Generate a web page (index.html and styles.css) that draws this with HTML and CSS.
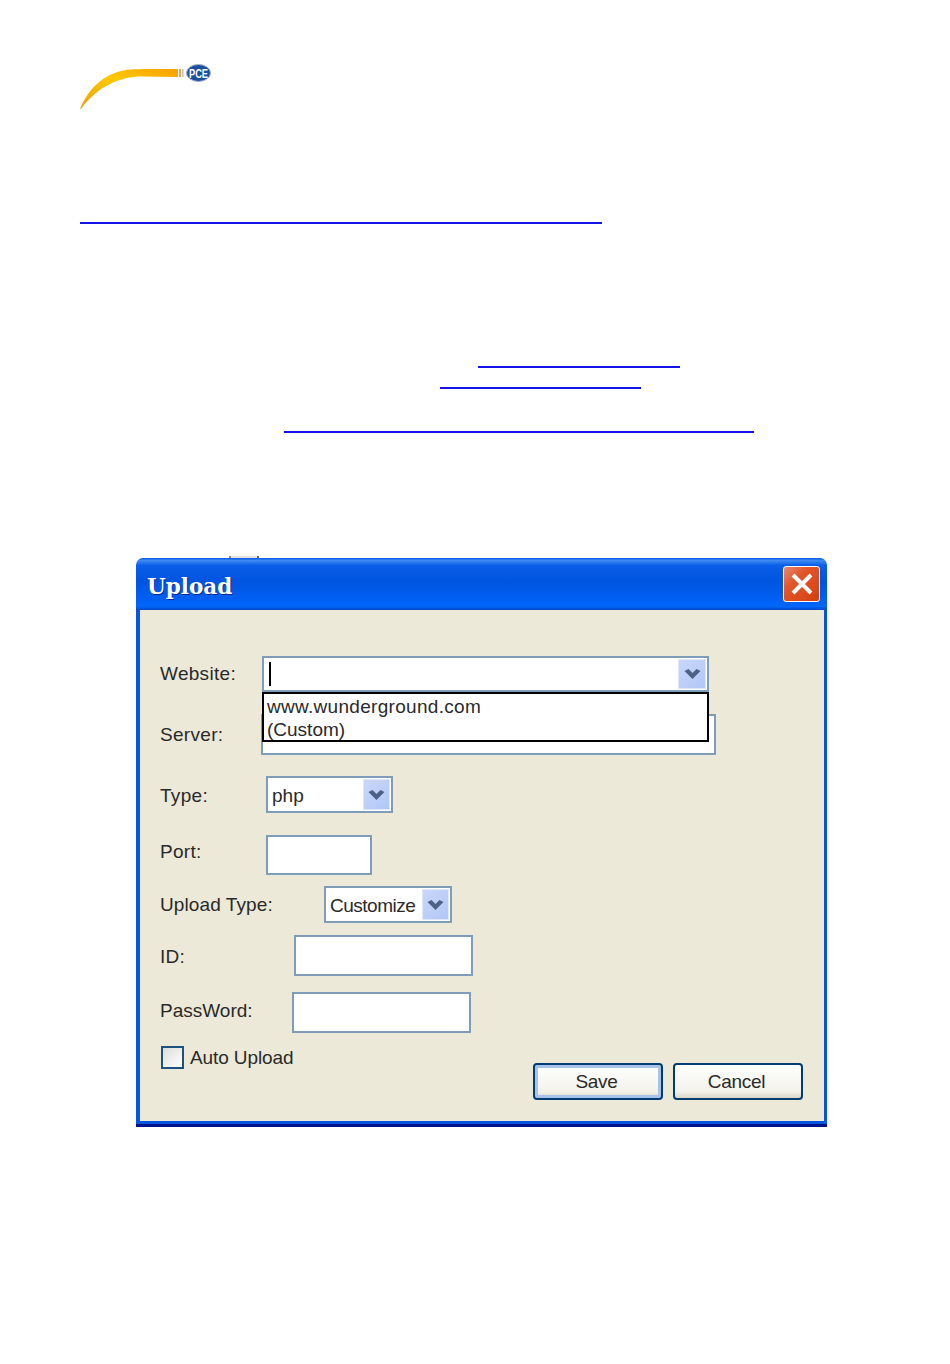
FILE: index.html
```html
<!DOCTYPE html>
<html lang="en">
<head>
  <meta charset="utf-8">
  <title>Upload</title>
  <link rel="stylesheet" href="styles.css">
</head>
<body>
  <div class="page">
    <svg class="logo" width="144" height="46" viewBox="0 0 144 46">
      <defs>
        <linearGradient id="swoosh" x1="0" y1="1" x2="1" y2="0">
          <stop offset="0" stop-color="#e8a010"/>
          <stop offset="0.55" stop-color="#ffc800"/>
          <stop offset="1" stop-color="#f5a000"/>
        </linearGradient>
      </defs>
      <path d="M0 45 C8 26 22 10 46 6 C52 5 60 5 98 5 L98 13 L62 12.500 C40 12.500 18 22 1 45 Z" fill="url(#swoosh)"/>
      <rect x="99" y="5" width="2" height="8" fill="#d8a860"/>
      <rect x="102" y="5" width="1.500" height="8" fill="#c8c0b0"/>
      <ellipse cx="118.500" cy="9" rx="12" ry="8.500" fill="#1c4f9e" stroke="#a9b4c4" stroke-width="1"/>
      <text class="logo-text" x="109" y="13.500" textLength="19" lengthAdjust="spacingAndGlyphs">PCE</text>
    </svg>

    <div class="rule rule-a"></div>
    <div class="rule rule-b"></div>
    <div class="rule rule-c"></div>
    <div class="rule rule-d"></div>

    <div class="dialog">
      <div class="peek"></div>
      <div class="titlebar">
        <span class="title">Upload</span>
        <div class="close">
          <svg width="24" height="24" viewBox="0 0 24 24">
            <path d="M3 3 L21 21 M21 3 L3 21" stroke="#fff" stroke-width="4"/>
          </svg>
        </div>
      </div>

      <div class="form">
        <div class="row row-website">
          <span class="label">Website:</span>
          <div class="field combo combo-website">
            <span class="caret"></span>
            <div class="arrow">
              <svg width="17" height="12" viewBox="0 0 16 12"><path d="M0 3 L4 1 L8 5 L12 1 L16 3 L8 11 Z" fill="#4d6185"/></svg>
            </div>
          </div>
          <div class="droplist">
            <div class="item">www.wunderground.com</div>
            <div class="item item-custom">(Custom)</div>
          </div>
        </div>

        <div class="row row-server">
          <span class="label">Server:</span>
          <div class="field input-server"></div>
        </div>

        <div class="row row-type">
          <span class="label">Type:</span>
          <div class="field combo combo-type">
            <span class="value">php</span>
            <div class="arrow">
              <svg width="17" height="12" viewBox="0 0 16 12"><path d="M0 3 L4 1 L8 5 L12 1 L16 3 L8 11 Z" fill="#4d6185"/></svg>
            </div>
          </div>
        </div>

        <div class="row row-port">
          <span class="label">Port:</span>
          <div class="field input-port"></div>
        </div>

        <div class="row row-upload">
          <span class="label">Upload Type:</span>
          <div class="field combo combo-upload">
            <span class="value">Customize</span>
            <div class="arrow">
              <svg width="17" height="12" viewBox="0 0 16 12"><path d="M0 3 L4 1 L8 5 L12 1 L16 3 L8 11 Z" fill="#4d6185"/></svg>
            </div>
          </div>
        </div>

        <div class="row row-id">
          <span class="label">ID:</span>
          <div class="field input-login"></div>
        </div>

        <div class="row row-password">
          <span class="label">PassWord:</span>
          <div class="field input-login"></div>
        </div>

        <div class="row-bottom">
          <div class="check">
            <span class="checkbox"></span>
            <span class="check-label">Auto Upload</span>
          </div>
          <div class="buttons">
            <button class="btn btn-default">Save</button>
            <button class="btn">Cancel</button>
          </div>
        </div>
      </div>
      <div class="window-bottom"></div>
      <div class="remnants">
        <span class="bit bit-a"></span>
        <span class="bit bit-b"></span>
        <span class="bit bit-c"></span>
        <span class="bit bit-d"></span>
      </div>
    </div>
  </div>
</body>
</html>
```

FILE: styles.css
```css
body {
  margin: 0;
  background: #fff;
  font-family: "Liberation Sans", Arial, sans-serif;
}

.page {
  padding: 64px 0 0 80px;
}

.logo {
  display: block;
}

.logo-text {
  font-family: "Liberation Sans", Arial, sans-serif;
  font-weight: bold;
  font-size: 12.500px;
  fill: #fff;
}

.rule {
  height: 2px;
  background: #1414e6;
}

.rule-a {
  width: 522px;
  margin-top: 112px;
}

.rule-b {
  width: 202px;
  margin: 142px 0 0 398px;
}

.rule-c {
  width: 201px;
  margin: 19px 0 0 360px;
}

.rule-d {
  width: 470px;
  margin: 42px 0 0 204px;
}

.dialog {
  position: relative;
  width: 691px;
  margin: 125px 0 0 56px;
  border-radius: 7px 7px 0 0;
}

.peek {
  position: absolute;
  top: -2px;
  left: 93px;
  width: 30px;
  height: 2px;
  box-sizing: border-box;
  background: #e2e2e2;
  border-left: 2px solid #8a8a8a;
  border-right: 2px solid #666;
}

.titlebar {
  height: 52px;
  display: flex;
  align-items: center;
  justify-content: space-between;
  padding: 0 7px 0 11px;
  box-sizing: border-box;
  border-radius: 7px 7px 0 0;
  background: linear-gradient(180deg, #0a55e2 0, #3f8cf3 5%, #0a5ee8 14%, #0055e0 45%, #0060f4 80%, #0066fa 93%, #0048c4 100%);
}

.title {
  font-family: "DejaVu Serif", serif;
  font-weight: bold;
  font-size: 21.500px;
  color: #fff;
  text-shadow: 1px 1px 0 #0a2a90;
  padding-top: 4px;
}

.close {
  width: 37px;
  height: 36px;
  box-sizing: border-box;
  display: flex;
  align-items: center;
  justify-content: center;
  border: 1.500px solid #fff;
  border-radius: 3px;
  background: linear-gradient(135deg, #e88a70 0, #e2562a 35%, #d4400f 100%);
}

.form {
  padding: 46px 21px 21px 20px;
  background: #ece9d8;
  border-left: 4px solid #0855dd;
  border-right: 3px solid #0855dd;
  font-size: 19px;
  color: #2a2a2a;
}

.window-bottom {
  height: 6px;
  background: linear-gradient(180deg, #0855dd 0, #0855dd 45%, #00138c 45%, #00138c 100%);
}

.remnants {
  position: absolute;
  top: 100%;
  left: 0;
  width: 100%;
  height: 1px;
}

.bit {
  position: absolute;
  top: 0;
  height: 1px;
  background: repeating-linear-gradient(90deg, #333 0 3px, #b09ac0 3px 5px, #111 5px 8px, #d8c8a0 8px 10px);
}

.bit-a { left: 132px; width: 2px; background: #444; }
.bit-b { left: 151px; width: 66px; }
.bit-c { left: 398px; width: 37px; }
.bit-d { left: 654px; width: 2px; background: #444; }

.row {
  position: relative;
  display: flex;
  align-items: center;
}

.label {
  flex: none;
  letter-spacing: 0.300px;
}

.field {
  box-sizing: border-box;
  background: #fff;
  border: 2px solid #7f9db9;
}

.combo {
  display: flex;
  align-items: center;
  justify-content: space-between;
  padding: 1px;
}

.arrow {
  display: flex;
  align-items: center;
  justify-content: center;
  height: 100%;
  box-sizing: border-box;
  background: linear-gradient(135deg, #c9d7f9, #b2c7f7);
  border: 1px solid #dfe6f8;
}

.value {
  padding: 2px 0 0 3px;
}

.combo-upload .value {
  letter-spacing: -0.500px;
}

.caret {
  width: 2px;
  height: 24px;
  margin-left: 4px;
  background: #000;
}

.row-website .label { width: 102px; }
.row-server .label { width: 101px; }
.row-type .label { width: 106px; padding-top: 2px; }
.row-port .label { width: 106px; padding-bottom: 6px; }
.row-upload .label { width: 164px; letter-spacing: 0.100px; }
.row-id .label { width: 134px; padding-top: 3px; }
.row-password .label { width: 132px; padding-bottom: 4px; letter-spacing: 0; }

.row-server { margin-top: 22px; }
.row-type { margin-top: 21px; }
.row-port { margin-top: 22px; }
.row-upload { margin-top: 11px; }
.row-id { margin-top: 12px; }
.row-password { margin-top: 16px; }

.combo-website {
  width: 447px;
  height: 36px;
}

.combo-website .arrow { width: 28px; }

.input-server {
  width: 455px;
  height: 41px;
}

.combo-type {
  width: 127px;
  height: 37px;
}

.combo-type .arrow { width: 27px; }

.input-port {
  width: 106px;
  height: 40px;
}

.combo-upload {
  width: 128px;
  height: 37px;
}

.combo-upload .arrow { width: 27px; }

.input-login {
  width: 179px;
  height: 41px;
}

.droplist {
  position: absolute;
  top: 36px;
  left: 102px;
  z-index: 2;
  width: 447px;
  height: 50px;
  box-sizing: border-box;
  background: #fff;
  border: 2px solid #000;
  padding: 1px 0 0 3px;
  letter-spacing: 0.300px;
}

.item {
  height: 23px;
  line-height: 23px;
}

.item-custom {
  letter-spacing: 0;
}

.row-bottom {
  display: flex;
  justify-content: space-between;
  margin-top: 12px;
}

.check {
  display: flex;
  align-items: center;
  align-self: flex-start;
  gap: 6px;
  margin-left: 1px;
}

.check-label {
  padding-top: 2px;
  letter-spacing: -0.100px;
}

.checkbox {
  width: 23px;
  height: 23px;
  box-sizing: border-box;
  border: 2px solid #1c5180;
  background: linear-gradient(135deg, #dcdcd7, #fff);
}

.buttons {
  display: flex;
  gap: 10px;
  margin-top: 18px;
}

.btn {
  width: 130px;
  height: 37px;
  box-sizing: border-box;
  border: 2px solid #003c74;
  border-radius: 4px;
  background: linear-gradient(180deg, #fff, #f3f2ea 80%, #dcd8c8);
  font: inherit;
  letter-spacing: -0.300px;
  color: #2a2a2a;
  padding: 0 3px 0 0;
}

.btn-default {
  box-shadow: inset 0 0 0 3px #a9c2ea;
}
```
